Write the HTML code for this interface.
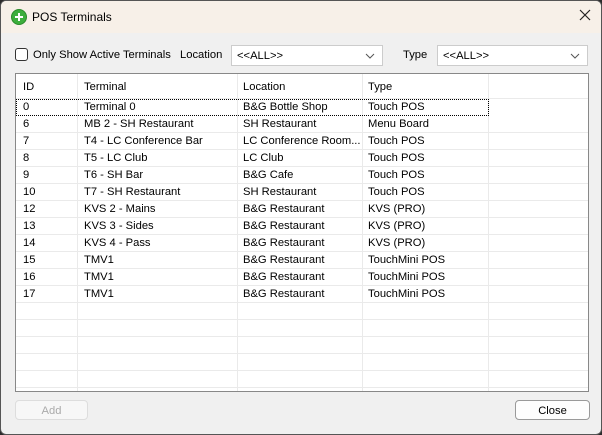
<!DOCTYPE html><html><head><style>
*{box-sizing:border-box;margin:0;padding:0}
body{width:602px;height:435px;background:#2b2b2b;font-family:"Liberation Sans",sans-serif;font-size:11.2px;color:#000;overflow:hidden;position:relative}
.win{position:absolute;left:0;top:0;width:602px;height:435px;background:#f0f0f0;border:1px solid #555;border-radius:6px;overflow:hidden}
.tb{position:absolute;left:0;top:0;width:600px;height:32px;background:#f7f0e8}
.tb .t{position:absolute;left:31px;top:9px;font-size:12px}
.ic{position:absolute;left:10px;top:8px;width:16px;height:16px;border-radius:50%;background:#3cae3c;border:1px solid #2a8a2a}
.ic:before{content:"";position:absolute;left:3px;top:6px;width:8px;height:2px;background:#fff}
.ic:after{content:"";position:absolute;left:6px;top:3px;width:2px;height:8px;background:#fff}
.x{position:absolute;left:578px;top:8px}
.lbl{position:absolute;top:48px}
.cb{position:absolute;left:14px;top:47px;width:13px;height:13px;border:1px solid #333;border-radius:3px;background:#fff}
.sel{position:absolute;top:44px;height:21px;background:#fff;border:1px solid #ccc;padding:4px 0 0 5px}
.sel svg{position:absolute;right:7px;top:7px}
.grid{position:absolute;left:14px;top:72px;width:574px;height:319px;background:#fff;border:1px solid #888;overflow:hidden}
.r{position:absolute;left:0;width:572px;height:17px;border-bottom:1px solid #eaeaea}
.c{position:absolute;top:2px;white-space:nowrap}
.vl{position:absolute;top:0;height:319px;width:1px;background:#eaeaea}
.btn{position:absolute;top:399px;height:20px;border:1px solid #bbb;border-radius:4px;text-align:center;padding-top:4px;background:#fdfdfd}
</style></head><body><div class="win">
<div class="tb"><div class="ic"></div><div class="t">POS Terminals</div><svg class="x" width="12" height="12"><path d="M1 1L11 11M11 1L1 11" stroke="#222" stroke-width="1.2"/></svg></div>
<div class="cb"></div><div class="lbl" style="left:32px">Only Show Active Terminals</div>
<div class="lbl" style="left:179px">Location</div>
<div class="sel" style="left:230px;width:152px">&lt;&lt;ALL&gt;&gt;<svg width="10" height="6"><path d="M1 1L5 5L9 1" stroke="#555" fill="none"/></svg></div>
<div class="lbl" style="left:402px">Type</div>
<div class="sel" style="left:436px;width:151px">&lt;&lt;ALL&gt;&gt;<svg width="10" height="6"><path d="M1 1L5 5L9 1" stroke="#555" fill="none"/></svg></div>
<div class="grid">
<div class="vl" style="left:61px"></div><div class="vl" style="left:221px"></div><div class="vl" style="left:346px"></div><div class="vl" style="left:472px"></div>
<div class="r" style="top:0;height:25px"><span class="c" style="left:7px;top:7px">ID</span><span class="c" style="left:68px;top:7px">Terminal</span><span class="c" style="left:227px;top:7px">Location</span><span class="c" style="left:352px;top:7px">Type</span></div>
<div class="r" style="top:25px;border:1px dotted #000;width:473px"><span class="c" style="left:6px;top:1px">0</span><span class="c" style="left:67px;top:1px">Terminal 0</span><span class="c" style="left:226px;top:1px">B&amp;G Bottle Shop</span><span class="c" style="left:351px;top:1px">Touch POS</span></div>
<div class="r" style="top:42px"><span class="c" style="left:7px">6</span><span class="c" style="left:68px">MB 2 - SH Restaurant</span><span class="c" style="left:227px">SH Restaurant</span><span class="c" style="left:352px">Menu Board</span></div>
<div class="r" style="top:59px"><span class="c" style="left:7px">7</span><span class="c" style="left:68px">T4 - LC Conference Bar</span><span class="c" style="left:227px">LC Conference Room...</span><span class="c" style="left:352px">Touch POS</span></div>
<div class="r" style="top:76px"><span class="c" style="left:7px">8</span><span class="c" style="left:68px">T5 - LC Club</span><span class="c" style="left:227px">LC Club</span><span class="c" style="left:352px">Touch POS</span></div>
<div class="r" style="top:93px"><span class="c" style="left:7px">9</span><span class="c" style="left:68px">T6 - SH Bar</span><span class="c" style="left:227px">B&amp;G Cafe</span><span class="c" style="left:352px">Touch POS</span></div>
<div class="r" style="top:110px"><span class="c" style="left:7px">10</span><span class="c" style="left:68px">T7 - SH Restaurant</span><span class="c" style="left:227px">SH Restaurant</span><span class="c" style="left:352px">Touch POS</span></div>
<div class="r" style="top:127px"><span class="c" style="left:7px">12</span><span class="c" style="left:68px">KVS 2 - Mains</span><span class="c" style="left:227px">B&amp;G Restaurant</span><span class="c" style="left:352px">KVS (PRO)</span></div>
<div class="r" style="top:144px"><span class="c" style="left:7px">13</span><span class="c" style="left:68px">KVS 3 - Sides</span><span class="c" style="left:227px">B&amp;G Restaurant</span><span class="c" style="left:352px">KVS (PRO)</span></div>
<div class="r" style="top:161px"><span class="c" style="left:7px">14</span><span class="c" style="left:68px">KVS 4 - Pass</span><span class="c" style="left:227px">B&amp;G Restaurant</span><span class="c" style="left:352px">KVS (PRO)</span></div>
<div class="r" style="top:178px"><span class="c" style="left:7px">15</span><span class="c" style="left:68px">TMV1</span><span class="c" style="left:227px">B&amp;G Restaurant</span><span class="c" style="left:352px">TouchMini POS</span></div>
<div class="r" style="top:195px"><span class="c" style="left:7px">16</span><span class="c" style="left:68px">TMV1</span><span class="c" style="left:227px">B&amp;G Restaurant</span><span class="c" style="left:352px">TouchMini POS</span></div>
<div class="r" style="top:212px"><span class="c" style="left:7px">17</span><span class="c" style="left:68px">TMV1</span><span class="c" style="left:227px">B&amp;G Restaurant</span><span class="c" style="left:352px">TouchMini POS</span></div>
<div class="r" style="top:229px"></div><div class="r" style="top:246px"></div><div class="r" style="top:263px"></div><div class="r" style="top:280px"></div><div class="r" style="top:297px"></div>
</div>
<div class="btn" style="left:14px;width:73px;color:#aaa;border-color:#ddd;background:#f7f7f7">Add</div>
<div class="btn" style="left:514px;width:75px;border-color:#999">Close</div>
</div></body></html>
